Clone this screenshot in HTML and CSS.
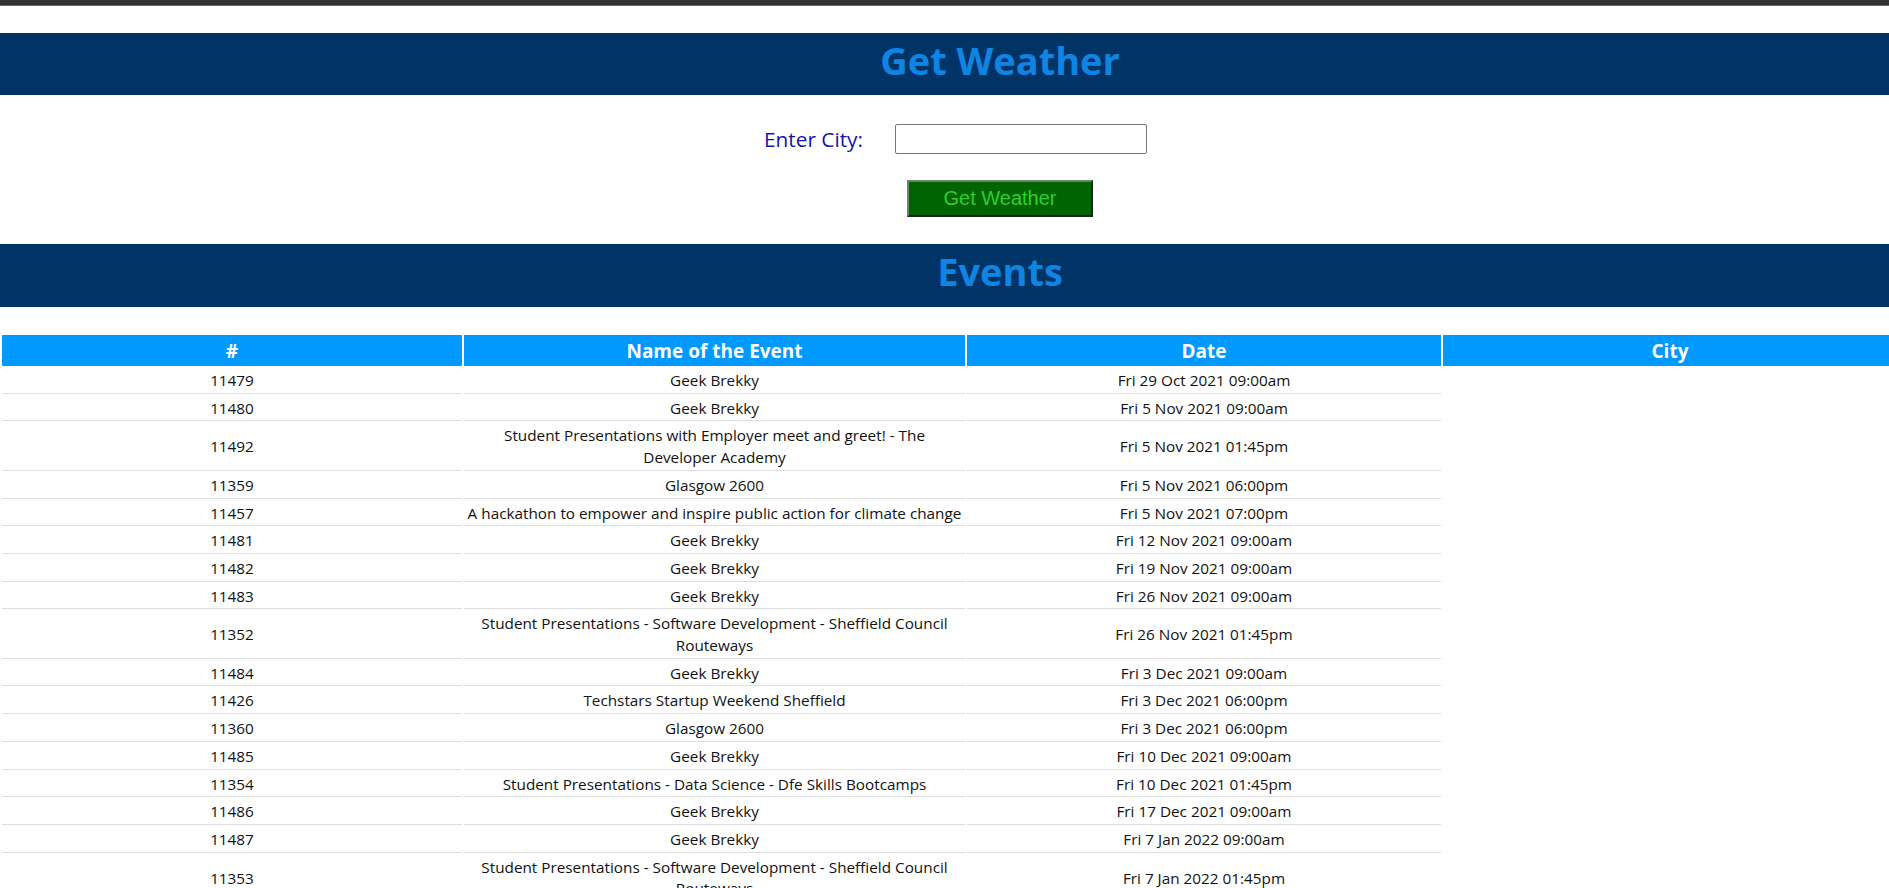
FILE: index.html
```html
<!DOCTYPE html>
<html lang="en">
<head>
<meta charset="utf-8">
<title>Get Weather</title>
<link rel="stylesheet" href="styles.css">
</head>
<body>
<div class="topbar"></div>
<header class="band band-weather"><h1 class="band-title">Get Weather</h1></header>
<form class="city-form">
  <label class="city-label" for="city">Enter City:</label>
  <input class="city-input" id="city" type="text">
  <button class="city-btn" type="button">Get Weather</button>
</form>
<section class="band band-events"><h1 class="band-title">Events</h1></section>
<table class="events">
  <colgroup><col class="c-id"><col class="c-name"><col class="c-date"><col class="c-city"></colgroup>
  <thead>
    <tr><th>#</th><th>Name of the Event</th><th>Date</th><th>City</th></tr>
  </thead>
  <tbody>
    <tr><td>11479</td><td>Geek Brekky</td><td>Fri 29 Oct 2021 09:00am</td></tr>
    <tr><td>11480</td><td>Geek Brekky</td><td>Fri 5 Nov 2021 09:00am</td></tr>
    <tr><td>11492</td><td>Student Presentations with Employer meet and greet! - The <span class="nobr">Developer Academy</span></td><td>Fri 5 Nov 2021 01:45pm</td></tr>
    <tr><td>11359</td><td>Glasgow 2600</td><td>Fri 5 Nov 2021 06:00pm</td></tr>
    <tr><td>11457</td><td>A hackathon to empower and inspire public action for climate change</td><td>Fri 5 Nov 2021 07:00pm</td></tr>
    <tr><td>11481</td><td>Geek Brekky</td><td>Fri 12 Nov 2021 09:00am</td></tr>
    <tr><td>11482</td><td>Geek Brekky</td><td>Fri 19 Nov 2021 09:00am</td></tr>
    <tr><td>11483</td><td>Geek Brekky</td><td>Fri 26 Nov 2021 09:00am</td></tr>
    <tr><td>11352</td><td>Student Presentations - Software Development - Sheffield Council Routeways</td><td>Fri 26 Nov 2021 01:45pm</td></tr>
    <tr><td>11484</td><td>Geek Brekky</td><td>Fri 3 Dec 2021 09:00am</td></tr>
    <tr><td>11426</td><td>Techstars Startup Weekend Sheffield</td><td>Fri 3 Dec 2021 06:00pm</td></tr>
    <tr><td>11360</td><td>Glasgow 2600</td><td>Fri 3 Dec 2021 06:00pm</td></tr>
    <tr><td>11485</td><td>Geek Brekky</td><td>Fri 10 Dec 2021 09:00am</td></tr>
    <tr><td>11354</td><td>Student Presentations - Data Science - Dfe Skills Bootcamps</td><td>Fri 10 Dec 2021 01:45pm</td></tr>
    <tr><td>11486</td><td>Geek Brekky</td><td>Fri 17 Dec 2021 09:00am</td></tr>
    <tr><td>11487</td><td>Geek Brekky</td><td>Fri 7 Jan 2022 09:00am</td></tr>
    <tr><td>11353</td><td>Student Presentations - Software Development - Sheffield Council Routeways</td><td>Fri 7 Jan 2022 01:45pm</td></tr>
    <tr><td>11488</td><td>Geek Brekky</td><td>Fri 14 Jan 2022 09:00am</td></tr>
    <tr><td>11489</td><td>Geek Brekky</td><td>Fri 21 Jan 2022 09:00am</td></tr>
  </tbody>
</table>
</body>
</html>
```

FILE: styles.css
```css
html, body {
  margin: 0;
  padding: 0;
  background: #ffffff;
}

body {
  font-family: "Open Sans", "Noto Sans", sans-serif;
  color: #000000;
  overflow-x: hidden;
}

.topbar {
  height: 5px;
  background: #333337;
  border-bottom: 1px solid #6a6a6e;
}

.band {
  background: #003366;
  margin-top: 27px;
}

.band-weather {
  height: 62px;
}

.band-events {
  height: 63px;
}

.band-title {
  margin: 0;
  padding-left: 111px;
  text-align: center;
  font-family: "Open Sans", sans-serif;
  font-size: 38px;
  font-weight: 700;
  line-height: 54px;
  color: #0f84e2;
}

.city-form {
  display: grid;
  grid-template-columns: 99px 252px;
  column-gap: 32px;
  row-gap: 26px;
  align-items: center;
  width: max-content;
  margin: 29px 0 0 764px;
}

.city-label {
  font-size: 20.8px;
  color: #1414a8;
  line-height: 28px;
  white-space: nowrap;
}

.city-input {
  grid-column: 2;
  box-sizing: border-box;
  width: 252px;
  height: 30px;
  border: 1px solid #767676;
  border-radius: 2px;
  padding: 0 4px;
  font-size: 16px;
  background: #ffffff;
}

.city-btn {
  grid-column: 2;
  justify-self: start;
  margin-left: 12px;
  box-sizing: border-box;
  width: 186px;
  height: 37px;
  padding: 0;
  background: #006400;
  color: #32cd32;
  font-family: "Liberation Sans", Arial, sans-serif;
  font-size: 20px;
  border-width: 2px;
  border-style: solid;
  border-color: #6b856b #1c261c #1c261c #6b856b;
}

.events {
  width: calc(100% + 10px);
  table-layout: fixed;
  border-spacing: 2px;
  margin-top: 26px;
}

.c-id { width: 460px; }
.c-name { width: 501px; }
.c-date { width: 474px; }

.events th {
  background: #0099ff;
  color: #ffffff;
  font-size: 19px;
  font-weight: 700;
  line-height: 29px;
  padding: 2px 1px 0;
}

.events td {
  text-align: center;
  font-size: 15.3px;
  line-height: 21.7px;
  padding: 2px 1px 1px;
  border-bottom: 1px solid #dddddd;
  color: #111111;
}

.nobr {
  white-space: nowrap;
}
```
